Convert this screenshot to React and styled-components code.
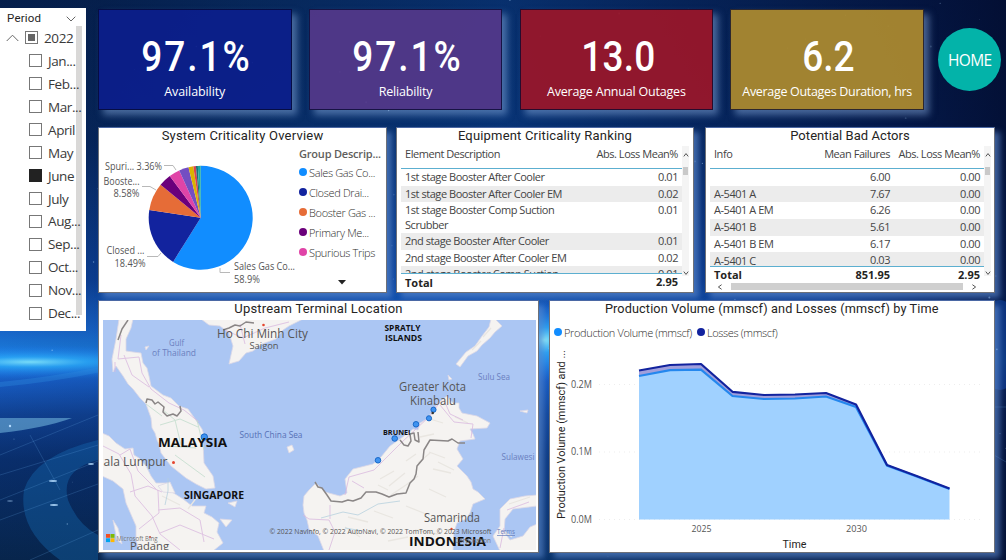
import React from "react";
import styled, { createGlobalStyle } from "styled-components";

const body = '"Open Sans", "Noto Sans", sans-serif';
const din = 'Roboto, "Liberation Sans", sans-serif';

const Global = createGlobalStyle`
  * { box-sizing: border-box; }
  body { margin: 0; background: #06153c; font-family: ${body}; color: #333; }
`;

const Page = styled.div`
  position: relative;
  width: 1006px;
  height: 560px;
  overflow: hidden;
`;
const Backdrop = styled.svg`
  position: absolute;
  inset: 0;
`;
const Layout = styled.div`
  position: relative;
  display: flex;
  align-items: flex-start;
  gap: 12px;
`;

/* ---------- period slicer ---------- */
const Slicer = styled.aside`
  width: 86px;
  height: 323px;
  margin-top: 8px;
  background: #fff;
  overflow: hidden;
`;
const SlicerHead = styled.div`
  display: flex;
  align-items: center;
  justify-content: space-between;
  height: 18px;
  padding: 3px 10px 0 7px;
  font: 400 11.5px/15px ${din};
  letter-spacing: 0.2px;
  color: #252423;
`;
const SlicerBody = styled.div`
  display: flex;
  height: 305px;
`;
const SlicerList = styled.div`
  width: 76px;
  padding-top: 0.5px;
  flex: none;
`;
const SlicerTrack = styled.div`
  width: 6px;
  height: 289px;
  background: #d9d8d7;
`;
const SlicerRow = styled.div`
  display: flex;
  align-items: center;
  position: relative;
  height: 22.95px;
  gap: 6px;
  padding-left: ${(p) => (p.$root ? 6 : 29)}px;
  font-size: 13.5px;
  letter-spacing: -0.4px;
  white-space: nowrap;
  color: #3a3a3a;
`;
const Check = styled.span`
  flex: none;
  display: grid;
  place-items: center;
  width: 13px;
  height: 13px;
  border: 1px solid ${(p) => (p.$on ? "#222" : "#777")};
  background: ${(p) => (p.$on ? "#222" : "#fff")};
`;
const Partial = styled.span`
  width: 7px;
  height: 7px;
  background: #666;
`;

/* ---------- main area ---------- */
const Main = styled.main`
  display: flex;
  flex-direction: column;
  width: 908px;
  padding-top: 9px;
`;
const KpiRow = styled.div`
  display: flex;
  height: 101px;
  gap: 17.3px;
`;
const Kpi = styled.section`
  width: 193.5px;
  height: 101px;
  padding-top: 23px;
  text-align: center;
  color: #fff;
  background: ${(p) => p.$color};
  border: 1px solid rgba(5, 8, 45, 0.75);
  box-shadow: 5px 5px 7px rgba(140, 175, 225, 0.5);
`;
const KpiValue = styled.div`
  font: 500 43px/46px ${din};
  letter-spacing: ${(p) => p.$track}px;
  padding-left: 4px;
  transform: scaleX(0.86);
`;
const KpiLabel = styled.div`
  font-size: 12.5px;
  line-height: 20px;
  margin-top: 3px;
  letter-spacing: ${(p) => p.$track}px;
  white-space: nowrap;
`;
const Home = styled.button`
  width: 63px;
  height: 63px;
  margin: 19px 0 0 -3px;
  padding: 1px 0 0;
  border: 0;
  border-radius: 50%;
  background: #03b3a9;
  color: #fff;
  font: 400 15.5px/62px ${body};
  letter-spacing: -0.65px;
`;
const PanelRow = styled.div`
  display: flex;
  margin-top: ${(p) => p.$top}px;
  height: ${(p) => p.$h}px;
`;
const Panel = styled.section`
  width: ${(p) => p.$w}px;
  margin-right: ${(p) => p.$gap || 0}px;
  height: 100%;
  flex: none;
  display: flex;
  flex-direction: column;
  overflow: hidden;
  background: #fff;
  border: 1px solid #6d7078;
  border-top-color: #4b68a4;
  box-shadow: 5px 5px 6px rgba(90, 135, 205, 0.65);
`;
const Title = styled.h2`
  flex: none;
  margin: 0;
  height: ${(p) => p.$h || 17}px;
  text-align: center;
  font: 400 ${(p) => p.$size || 13}px/16px ${din};
  letter-spacing: ${(p) => p.$track}px;
  color: #252423;
  white-space: nowrap;
`;
const Split = styled.div`
  display: flex;
`;
const PieLegend = styled.div`
  display: flex;
  flex-direction: column;
  width: 87px;
  height: 147px;
  padding-left: 1px;
`;
const LegendHead = styled.div`
  font-size: 11px;
  font-weight: 600;
  line-height: 17px;
  letter-spacing: -0.2px;
  color: #605e5c;
  white-space: nowrap;
`;
const LegendItem = styled.div`
  display: flex;
  align-items: center;
  gap: 2px;
  height: ${(p) => p.$h || 20}px;
  font-size: 11px;
  font-weight: 300;
  letter-spacing: ${(p) => p.$track || 0}px;
  color: #2f2e2d;
  white-space: nowrap;
`;
const Dot = styled.i`
  flex: none;
  width: 8px;
  height: 8px;
  border-radius: 50%;
  background: ${(p) => p.$color};
`;
const More = styled.svg`
  margin: 18px 0 0 39px;
`;

/* ---------- tables ---------- */
const TableWrap = styled.div`
  display: flex;
  padding-left: 4px;
  height: 149px;
`;
const Table = styled.div`
  width: ${(p) => p.$w}px;
  flex: none;
`;
const Line = styled.div`
  display: grid;
  grid-template-columns: ${(p) => p.$cols};
  align-items: ${(p) => (p.$head ? "start" : "center")};
  height: ${(p) => p.$h || 16.5}px;
  padding: 0 4px;
  font-size: 11px;
  font-weight: ${(p) => (p.$bold ? 700 : 400)};
  letter-spacing: ${(p) => (p.$bold ? 0 : -0.46)}px;
  line-height: ${(p) => (p.$head ? 17 : 14.5)}px;
  color: ${(p) => (p.$bold ? "#252423" : "#444")};
  background: ${(p) => (p.$alt ? "#ececec" : "transparent")};
  border-bottom: ${(p) => (p.$head ? "1px solid #5cafd0" : "0")};
`;
const Num = styled.span`
  text-align: right;
  white-space: nowrap;
  align-self: start;
  padding-top: ${(p) => (p.$head ? 0 : 1)}px;
`;
const Rows = styled.div`
  height: ${(p) => p.$h}px;
  overflow: hidden;
  border-bottom: 1px solid #5cafd0;
`;
const VBar = styled.div`
  width: 7px;
  height: ${(p) => p.$h}px;
  display: flex;
  flex-direction: column;
  align-items: center;
  margin-top: 1px;
  background: #f4f4f4;
`;
const VThumb = styled.div`
  width: 5px;
  height: 8px;
  margin: 3px 0 auto;
  background: #c9c9c9;
`;
const HBar = styled.div`
  display: flex;
  align-items: center;
  justify-content: space-between;
  height: 8px;
  padding: 0 7px;
`;
const HThumb = styled.div`
  width: 232px;
  height: 7px;
  background: #cfcfcf;
`;
const MapSvg = styled.svg`
  display: block;
  margin-left: 4px;
`;
const ChartLegend = styled.div`
  display: flex;
  gap: 5px;
  height: 18px;
  padding-left: 4px;
`;

const Arrow = ({ d, w = 6, h = 6 }) => (
  <svg width={w} height={h} viewBox="0 0 6 6">
    <path d={d} fill="none" stroke="#555" strokeWidth="1" />
  </svg>
);
const UP = "M.8 4.4L3 1.6l2.2 2.8";
const DOWN = "M.8 1.6L3 4.4l2.2-2.8";
const LEFT = "M4.6 .7L1.4 3l3.2 2.3";
const RIGHT = "M1.4 .7L4.6 3l-3.2 2.3";

function T({ x, y, w, size = 10, fill = "#555", weight = 400, anchor, children, ...rest }) {
  return (
    <text
      x={x}
      y={y}
      fontSize={size}
      fill={fill}
      fontWeight={weight}
      textAnchor={anchor}
      textLength={w}
      lengthAdjust="spacingAndGlyphs"
      fontFamily={body}
      {...rest}
    >
      {children}
    </text>
  );
}

/* ---------- background ---------- */
const rand = (() => {
  let s = 11;
  return () => ((s = (s * 16807) % 2147483647) / 2147483647);
})();
const stars = Array.from({ length: 170 }, () => [rand() * 1006, rand() * 560, 0.3 + rand() * 0.7, 0.15 + rand() * 0.45]);

const Scene = () => (
  <Backdrop width="1006" height="560" viewBox="0 0 1006 560">
    <defs>
      <linearGradient id="sky" x1="0" y1="0" x2="0" y2="1">
        <stop offset="0" stopColor="#06214f" />
        <stop offset=".25" stopColor="#07285e" />
        <stop offset=".5" stopColor="#0d45a0" />
        <stop offset=".585" stopColor="#1a6cd8" />
        <stop offset=".645" stopColor="#1f93f8" />
        <stop offset=".68" stopColor="#1a66d6" />
        <stop offset=".74" stopColor="#12479d" />
        <stop offset=".82" stopColor="#0a3273" />
        <stop offset="1" stopColor="#08284f" />
      </linearGradient>
      <linearGradient id="side" x1="0" y1="0" x2="1" y2="0">
        <stop offset="0" stopColor="#021237" stopOpacity=".12" />
        <stop offset=".1" stopColor="#03163f" stopOpacity=".2" />
        <stop offset=".25" stopColor="#0a3f85" stopOpacity=".2" />
        <stop offset=".5" stopColor="#0b4ba5" stopOpacity=".35" />
        <stop offset=".82" stopColor="#020b3a" stopOpacity=".3" />
        <stop offset="1" stopColor="#020a2c" stopOpacity=".78" />
      </linearGradient>
      <radialGradient id="glow">
        <stop offset="0" stopColor="#8ff2ff" />
        <stop offset=".3" stopColor="#2fb2ff" stopOpacity=".8" />
        <stop offset="1" stopColor="#1a6cf0" stopOpacity="0" />
      </radialGradient>
    </defs>
    <rect width="1006" height="560" fill="url(#sky)" />
    <rect width="1006" height="560" fill="url(#side)" />
    <ellipse cx="30" cy="362" rx="190" ry="17" fill="url(#glow)" opacity=".8" />
    <ellipse cx="544" cy="340" rx="60" ry="42" fill="url(#glow)" />
    <ellipse cx="1000" cy="345" rx="22" ry="45" fill="#1558d0" opacity=".35" />
    <path d="M-20 386Q40 382 98 370" stroke="#2d8be0" strokeWidth="5" opacity=".35" fill="none" />
    <path d="M0 418L72 418Q45 428 0 433Z" fill="#6fb3da" opacity=".6" />
    <path d="M24 490Q35 455 98 440V460Q60 470 68 500Q78 525 98 535V560H60Q18 530 24 490Z" fill="#1773bd" opacity=".35" />
    <g stroke="#69aeea" fill="none" opacity=".3">
      <path d="M0 455L98 415M0 500L98 461M0 520L98 484M30 435L60 490M30 560L98 530M0 475L98 445M994 407H1006M994 455L1006 462" strokeWidth=".7" />
    </g>
    <g fill="#b4dcff">
      {stars.map(([x, y, r, o], i) => (
        <circle key={i} cx={x} cy={y} r={r} opacity={o} />
      ))}
      <ellipse cx="53" cy="481" rx="4" ry=".9" opacity=".85" />
      <ellipse cx="54" cy="505" rx="4" ry=".9" opacity=".85" />
      <ellipse cx="91" cy="464" rx="3" ry=".9" opacity=".8" />
      <ellipse cx="10" cy="501" rx="3" ry=".8" opacity=".5" />
      <circle cx="10" cy="426" r="1.2" />
    </g>
  </Backdrop>
);

/* ---------- pie ---------- */
const slices = [
  [58.9, "#118dff"],
  [18.49, "#12239e"],
  [8.58, "#e66c37"],
  [3.9, "#6b007b"],
  [3.36, "#e044a7"],
  [3.0, "#744ec2"],
  [1.5, "#d9b300"],
  [0.8, "#d64550"],
  [0.6, "#197278"],
  [0.87, "#1aab9f"],
];
const Pie = () => {
  const cx = 200.7, cy = 217.8, r = 52;
  let acc = 0;
  const pt = (p) => {
    const a = (p / 100) * Math.PI * 2;
    return `${(cx + r * Math.sin(a)).toFixed(2)} ${(cy - r * Math.cos(a)).toFixed(2)}`;
  };
  return (
    <svg width="199" height="147" viewBox="99 145 199 147">
      {slices.map(([v, c]) => {
        const a = acc;
        acc += v;
        return <path key={c} fill={c} d={`M${cx} ${cy}L${pt(a)}A${r} ${r} 0 ${v > 50 ? 1 : 0} 1 ${pt(acc)}Z`} />;
      })}
      <g fill="none" stroke="#b8b8b8">
        <path d="M164 165.5H173L176 170M142 186.5H150L156 190M147 256.5H158L161 253M220 268V272.5H230" />
      </g>
      <T x="105" y="170" w="57">Spuri... 3.36%</T>
      <T x="103.5" y="185" w="36">Booste...</T>
      <T x="113.5" y="197" w="26">8.58%</T>
      <T x="106.5" y="254" w="38">Closed ...</T>
      <T x="114.5" y="267" w="31">18.49%</T>
      <T x="234" y="270" w="61">Sales Gas Co...</T>
      <T x="234" y="283" w="26">58.9%</T>
    </svg>
  );
};

/* ---------- map ---------- */
const Land = () => (
  <>
    <g fill="#f5f3f1" stroke="#dcd8e6" strokeWidth=".8" strokeLinejoin="round">
      <path d="M119 319L116 339L112 359L113 372L116 366L123 376L128 384L133 389L140 398L146 404L151 418L152 428L155 433L157 440L159 444L161 453L171 466L186 478L196 484L206 489L215 488L213 476L204 463L203 443L204 435L202 429L193 416L188 409L179 406L171 398L163 395L151 386L149 376L147 368L143 363L141 353L133 352L126 351L126 339L131 328L133 319Z" />
      <path d="M102 433L109 436L116 443L125 449L133 448L134 455L139 458L146 466L151 476L156 483L168 483L172 492L183 499L192 506L206 506L204 513L212 517L219 523L217 532L223 543L213 551H139L136 540L136 526L126 503L123 489L113 481L102 476Z" />
      <path d="M201 319L209 325L220 326L229 333L233 346L229 364L239 361L246 353L253 351L262 344L276 339L283 330L289 326L303 319Z" />
      <path d="M316 483L309 490L304 496L303 505L304 513L307 520L309 529L318 536L324 551H453L454 532L457 523L466 519L470 513L473 504L485 499L478 492L473 489L471 482L467 476L457 466L463 459L457 449L460 441L475 439L473 434L470 429L487 428L490 423L477 416L462 413L459 408V403L453 403L447 396L438 403L427 419L420 423L418 430L413 429L400 439L390 446L381 457L373 464L353 469L345 479L347 493L340 496L325 492Z" />
      <path d="M500 551L493 536L500 526V509L510 499L525 496L537 495V506L513 509L505 519L504 532L510 540L523 536L530 527L537 524V551Z" />
      <path d="M456 364L466 352L475 346L482 336L489 327L491 319H495L502 326L495 332L490 338L482 345L477 351L468 356L460 367Z" />
      <path d="M520 411L528 410L527 413ZM287 447L292 445L294 450L289 453ZM228 503L237 501L235 507ZM220 519L232 520L226 527ZM113 520L118 528L122 544L117 540ZM145 347L149 346L146 350ZM158 486L170 482L175 493L163 492ZM448 375L452 379L449 380Z" />
    </g>
    <g fill="none" stroke="#e9e6e1" strokeWidth="1.3">
      <path d="M380 479l14-8m-5 15l16-13m-14 22l18-12m-31 2l10 5m28-36l-10 7m24-8l-12 10m0 13l-12 9m-58 32l20 5m6-11l19 7m13-12l20 8m3-25l17 8m-8-35l16 8m-39 60l23 4m10-14l17-4m-77 25l20-4m-63-10l15 10m60-100l14-3m-4-15l13 4m12-6l13 6M429 452l16 6m-12 11l18 4" />
      <path d="M491 328l-8 9m-2 4l-9 9m58 147l-21 7m-7 26l10 7m-350-41l18 9m17-8l-9 12" />
    </g>
    <g fill="none" stroke="#d9b7df" strokeWidth="1" opacity=".75">
      <path d="M121 335l-3 24 21-2 3 16 9 16 18 14 15 7 15 12M124 355l8 20 17 12M115 362v10M103 446l16 8 12 20 4 22 17 20 8 18 20 16M120 455l10-6 8 22 20 20 1 22-20 16M130 492l18-6 14 6M158 510l22-2 20 12 4 22M160 533l20-8 34 14M225 330l18 8 22-10 24-6M240 324l5 20M345 495l4-18 25-7 28-28 28-26 10-14M352 481l12 7M440 405l14 17 19 2-2 14M309 519l20 1 6 12-6 18M500 548l4-20M507 510l22-8M330 505v14M303 515l6 4M444 400l6 14 13 6" />
      <path d="M163 410l12 10 6 25M175 455l30 22M197 420l7 30M146 404l16 12M160 425l20-6 18 8M168 446l28 2" stroke="#c0dccb" />
      <path d="M321 518l22-6 15 3 20-11 22-3M168 478v13l-3 14M345 528l18 3" stroke="#b4d0de" />
    </g>
    <g fill="none" stroke="#8a8686" strokeWidth="1.5" strokeLinejoin="round">
      <path d="M128 320L122 329L118 340M146 403L147 399L152 400L155 404L158 402L164 407L163 412L167 416L173 414L177 416L181 411L180 406M223 330L229 328L235 325L240 326L246 322L254 323" />
      <path d="M315 482L318 487L322 488L327 495L331 501L342 502L348 500L353 501L361 498L366 492L376 492L382 494L389 497L397 494L406 493L410 483L414 479L416 474L417 466L423 459L424 450L430 440L448 441L452 439L458 443L465 443M400 440L404 445L408 446L411 441L410 434L414 433L415 440L419 442L418 432" />
    </g>
  </>
);
const pins = [[204.3, 437, 3.2], [378, 460.3, 2.8], [394.7, 438.5, 2.8], [416, 424.3, 2.8], [429, 418.3, 2.6], [433.5, 409.7, 2.6]];
const WorldMap = () => (
  <MapSvg width="433" height="230" viewBox="103 320 433 230">
    <rect x="103" y="320" width="433" height="230" fill="#abc6f3" />
    <Land />
    <T x="169" y="345.5" w="15" size="9" fill="#6a7fc0">Gulf</T>
    <T x="152" y="356" w="44" size="9" fill="#6a7fc0">of Thailand</T>
    <T x="217" y="338" w="91" size="12">Ho Chi Minh City</T>
    <T x="249.5" y="349" w="29" size="9.5">Saigon</T>
    <T x="384.5" y="331" w="36" size="9" weight="700" fill="#111">SPRATLY</T>
    <T x="385" y="340.5" w="37" size="9" weight="700" fill="#111">ISLANDS</T>
    <T x="478" y="380" w="32" size="8.5" fill="#6a7fc0">Sulu Sea</T>
    <T x="239.5" y="438" w="63" size="9.5" fill="#5670b5">South China Sea</T>
    <T x="501.5" y="460" w="33" size="8.5" fill="#6a7fc0">Sulawesi</T>
    <T x="399" y="391" w="67" size="12">Greater Kota</T>
    <T x="410" y="405" w="46" size="12">Kinabalu</T>
    <T x="103.5" y="466" w="64" size="12">ala Lumpur</T>
    <T x="424" y="522" w="56" size="12">Samarinda</T>
    <T x="130" y="550" w="39" size="11.5">Padang</T>
    {pins.map(([x, y, r]) => (
      <circle key={x} cx={x} cy={y} r={r} fill="#3f93f0" stroke="#1262c4" strokeWidth=".9" />
    ))}
    <circle cx="432.7" cy="413" r="1.3" fill="#333" />
    <T x="158" y="447" w="69" size="13" weight="700" fill="#111">MALAYSIA</T>
    <T x="184" y="498.5" w="60" size="10.5" weight="700" fill="#111">SINGAPORE</T>
    <T x="383" y="435" w="27.5" size="7.5" weight="700" fill="#111">BRUNEI</T>
    <g fill="#e5452f">
      <circle cx="173.5" cy="462.5" r="1.5" />
      <circle cx="263.5" cy="325" r="1.3" />
      <circle cx="451.5" cy="529" r="1.2" />
      <circle cx="150" cy="537" r="1" />
    </g>
    <path d="M106 534h4v3.8h-4z" fill="#f25022" />
    <path d="M110.5 534h4v3.8h-4z" fill="#7fba00" />
    <path d="M106 538.3h4v3.8h-4z" fill="#00a4ef" />
    <path d="M110.5 538.3h4v3.8h-4z" fill="#ffb900" />
    <T x="116.5" y="541" w="41" size="7" fill="#777">Microsoft Bing</T>
    <T x="269.5" y="534" w="222" size="7" fill="#555">© 2022 NavInfo, © 2022 AutoNavi, © 2022 TomTom, © 2023 Microsoft</T>
    <T x="497" y="534" w="18" size="7" fill="#667dbb" textDecoration="underline">Terms</T>
    <T x="409" y="545.5" w="77" size="12" weight="700" fill="#111">INDONESIA</T>
    <T x="455" y="542.5" w="36" size="7" fill="#777">Corporation</T>
  </MapSvg>
);

/* ---------- area chart ---------- */
const xs = [639, 670, 701, 732.5, 764, 795, 826, 856, 887, 918, 949.5];
const volume = [376, 370.2, 369.7, 396, 399, 398.5, 396.5, 407, 465.5, 477, 489];
const total = [370.5, 365, 364, 391.8, 395, 394.5, 393, 404.5, 465, 476.5, 488.5];
const line = (ys) => ys.map((y, i) => `${xs[i]} ${y}`).join("L");
const back = volume.map((y, i) => `${xs[i]} ${y}`).reverse().join("L");
const AreaChart = () => (
  <svg width="443" height="211" viewBox="550 341 443 211">
    <path d="M599 384.5H984M599 452H984M599 519.5H984" stroke="#ededed" strokeDasharray="1 4" />
    <path d={`M639 519.5L${line(volume)}L949.5 519.5Z`} fill="#a0d1ff" />
    <path d={`M${line(total)}L${back}Z`} fill="#a09fdc" />
    <path d={`M${line(volume)}`} fill="none" stroke="#2487ee" strokeWidth="2.2" />
    <path d={`M${line(total)}`} fill="none" stroke="#12239e" strokeWidth="2.2" strokeLinejoin="round" />
    <T x="571" y="388" w="21">0.2M</T>
    <T x="571" y="455" w="21">0.1M</T>
    <T x="571" y="523" w="21">0.0M</T>
    <T x="691.5" y="532" w="20" size="9.5">2025</T>
    <T x="846" y="532" w="21" size="9.5">2030</T>
    <T x="782.5" y="548" w="24" size="11.5" fill="#252423" fontFamily={din}>Time</T>
    <T x="0" y="0" w="169" size="11.5" fill="#252423" fontFamily={din} transform="translate(564.5 519) rotate(-90)">
      Production Volume (mmscf) and ...
    </T>
  </svg>
);

/* ---------- data ---------- */
const months = ["Jan...", "Feb...", "Mar...", "April", "May", "June", "July", "Aug...", "Sep...", "Oct...", "Nov...", "Dec..."];
const kpis = [
  ["97.1%", "Availability", "rgba(12,30,140,.92)", -0.1, 2.3],
  ["97.1%", "Reliability", "rgba(84,56,138,.93)", -0.2, 2.3],
  ["13.0", "Average Annual Outages", "rgba(152,22,42,.95)", -0.2, 0.3],
  ["6.2", "Average Outages Duration, hrs", "rgba(168,135,48,.96)", -0.32, 0],
];
const legend = [
  ["Sales Gas Co...", "#118dff"],
  ["Closed Drai...", "#12239e"],
  ["Booster Gas ...", "#e66c37"],
  ["Primary Me...", "#6b007b"],
  ["Spurious Trips", "#e044a7"],
];
const ranking = [
  ["1st stage Booster After Cooler", "0.01"],
  ["1st stage Booster After Cooler EM", "0.02"],
  ["1st stage Booster Comp Suction Scrubber", "0.01", 31],
  ["2nd stage Booster After Cooler", "0.01"],
  ["2nd stage Booster After Cooler EM", "0.02"],
  ["2nd stage Booster Comp Suction", "0.01"],
];
const actors = [
  ["", "6.00", "0.00"],
  ["A-5401 A", "7.67", "0.00"],
  ["A-5401 A EM", "6.26", "0.00"],
  ["A-5401 B", "5.61", "0.00"],
  ["A-5401 B EM", "6.17", "0.00"],
  ["A-5401 C", "0.03", "0.00"],
];
const C2 = "172px 1fr";
const C3 = "96px 80px 1fr";

export default function App() {
  return (
    <Page>
      <Global />
      <Scene />
      <Layout>
        <Slicer>
          <SlicerHead>
            Period
            <svg width="10" height="6" viewBox="0 0 10 6">
              <path d="M.7.7L5 5L9.3.7" fill="none" stroke="#666" />
            </svg>
          </SlicerHead>
          <SlicerBody>
            <SlicerList>
              <SlicerRow $root>
                <svg width="13" height="8" viewBox="0 0 13 8">
                  <path d="M.7 7L6.5 1.2L12.3 7" fill="none" stroke="#666" />
                </svg>
                <Check>
                  <Partial />
                </Check>
                2022
              </SlicerRow>
              {months.map((m) => (
                <SlicerRow key={m}>
                  <Check $on={m === "June"} />
                  {m}
                </SlicerRow>
              ))}
            </SlicerList>
            <SlicerTrack />
          </SlicerBody>
        </Slicer>

        <Main>
          <KpiRow>
            {kpis.map(([v, l, c, t, vt]) => (
              <Kpi key={l} $color={c}>
                <KpiValue $track={vt}>{v}</KpiValue>
                <KpiLabel $track={t}>{l}</KpiLabel>
              </Kpi>
            ))}
            <Home>HOME</Home>
          </KpiRow>

          <PanelRow $top={17} $h={166}>
            <Panel $w={289} $gap={9}>
              <Title $track={0.2}>System Criticality Overview</Title>
              <Split>
                <Pie />
                <PieLegend>
                  <LegendHead>Group Descrip...</LegendHead>
                  {legend.map(([t, c]) => (
                    <LegendItem key={t} $track={-0.35}>
                      <Dot $color={c} />
                      {t}
                    </LegendItem>
                  ))}
                  <More width="8" height="5" viewBox="0 0 8 5">
                    <path d="M0 0H8L4 4.5Z" fill="#222" />
                  </More>
                </PieLegend>
              </Split>
            </Panel>

            <Panel $w={298} $gap={11}>
              <Title $track={0.18}>Equipment Criticality Ranking</Title>
              <TableWrap>
                <Table $w={281}>
                  <Line $head $cols={C2} $h={24}>
                    <span>Element Description</span>
                    <Num $head>Abs. Loss Mean%</Num>
                  </Line>
                  <Rows $h={105}>
                    {ranking.map(([n, v, h], i) => (
                      <Line key={n} $cols={C2} $h={h} $alt={i % 2 === 1}>
                        <span>{n}</span>
                        <Num>{v}</Num>
                      </Line>
                    ))}
                  </Rows>
                  <Line $cols={C2} $bold $h={18}>
                    <span>Total</span>
                    <Num>2.95</Num>
                  </Line>
                </Table>
                <VBar $h={130}>
                  <Arrow d={UP} h={18} />
                  <VThumb />
                  <Arrow d={DOWN} />
                </VBar>
              </TableWrap>
            </Panel>

            <Panel $w={290}>
              <Title $track={0.06}>Potential Bad Actors</Title>
              <TableWrap>
                <Table $w={274}>
                  <Line $head $cols={C3} $h={24}>
                    <span>Info</span>
                    <Num $head>Mean Failures</Num>
                    <Num $head>Abs. Loss Mean%</Num>
                  </Line>
                  <Rows $h={98}>
                    {actors.map(([n, a, b], i) => (
                      <Line key={n} $cols={C3} $h={16.7} $alt={i % 2 === 1}>
                        <span>{n}</span>
                        <Num>{a}</Num>
                        <Num>{b}</Num>
                      </Line>
                    ))}
                  </Rows>
                  <Line $cols={C3} $bold $h={15.5}>
                    <span>Total</span>
                    <Num>851.95</Num>
                    <Num>2.95</Num>
                  </Line>
                  <HBar>
                    <Arrow d={LEFT} />
                    <HThumb />
                    <Arrow d={RIGHT} />
                  </HBar>
                </Table>
                <VBar $h={130}>
                  <Arrow d={UP} h={18} />
                  <VThumb />
                  <Arrow d={DOWN} />
                </VBar>
              </TableWrap>
            </Panel>
          </PanelRow>

          <PanelRow $top={7} $h={253}>
            <Panel $w={441} $gap={10}>
              <Title $h={19} $track={0.2}>Upstream Terminal Location</Title>
              <WorldMap />
            </Panel>
            <Panel $w={445.5}>
              <Title $h={22} $size={12.7} $track={0.13}>Production Volume (mmscf) and Losses (mmscf) by Time</Title>
              <ChartLegend>
                <LegendItem $h={18} $track={-0.36}>
                  <Dot $color="#118dff" />
                  Production Volume (mmscf)
                </LegendItem>
                <LegendItem $h={18} $track={-0.36}>
                  <Dot $color="#12239e" />
                  Losses (mmscf)
                </LegendItem>
              </ChartLegend>
              <AreaChart />
            </Panel>
          </PanelRow>
        </Main>
      </Layout>
    </Page>
  );
}
